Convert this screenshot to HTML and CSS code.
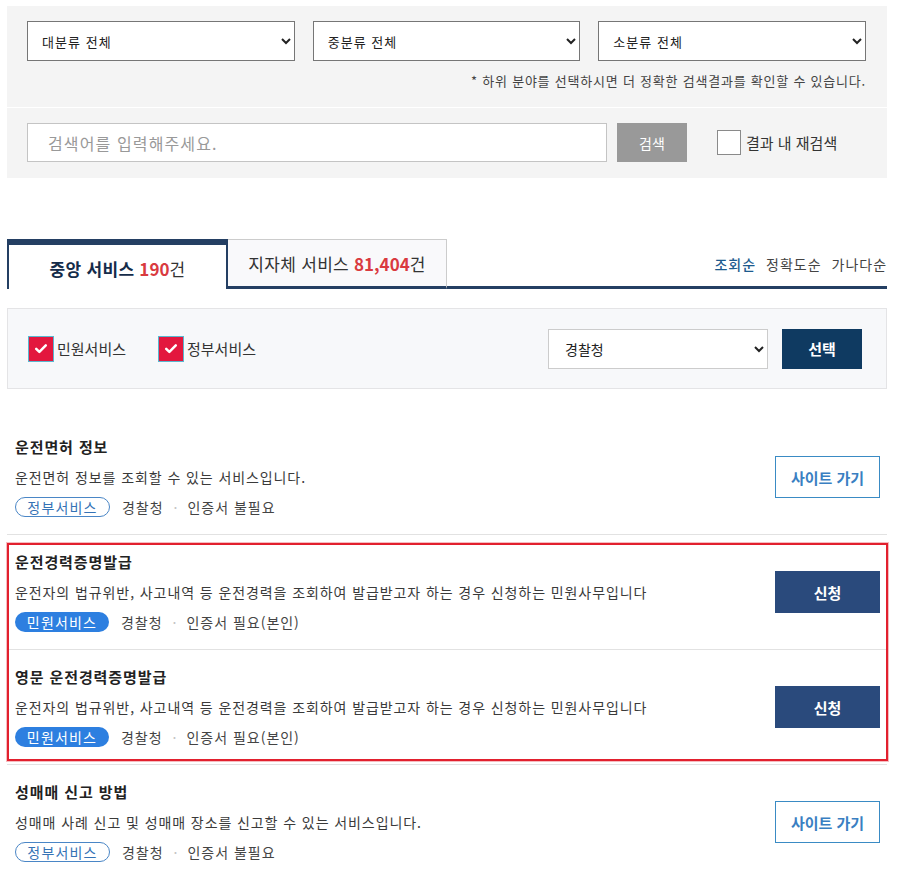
FILE: index.html
```html
<!DOCTYPE html>
<html lang="ko">
<head>
<meta charset="utf-8">
<title>서비스 검색</title>
<link rel="stylesheet" href="styles.css">
</head>
<body>
<div class="page">
  <section class="search-box">
    <div class="search-top">
      <div class="selects">
        <select class="sel"><option>대분류 전체</option></select>
        <select class="sel"><option>중분류 전체</option></select>
        <select class="sel"><option>소분류 전체</option></select>
      </div>
      <p class="note">* 하위 분야를 선택하시면 더 정확한 검색결과를 확인할 수 있습니다.</p>
    </div>
    <div class="search-bottom">
      <input class="search-input" type="text" placeholder="검색어를 입력해주세요.">
      <button class="search-btn" type="button">검색</button>
      <label class="re-search"><span class="box"></span>결과 내 재검색</label>
    </div>
  </section>

  <nav class="tabs">
    <div class="tab active">중앙 서비스 <b class="num">190</b><span class="unit">건</span></div>
    <div class="tab">지자체 서비스 <b class="num">81,404</b>건</div>
    <div class="tab-rest">
      <a class="sort on">조회순</a>
      <a class="sort">정확도순</a>
      <a class="sort">가나다순</a>
    </div>
  </nav>

  <section class="filter">
    <label class="chk"><span class="chk-box"><svg width="25" height="25" viewBox="0 0 25 25"><path d="M7.5 12.8 L10.8 16 L17.5 9.2" fill="none" stroke="#fff" stroke-width="2.6" stroke-linecap="round" stroke-linejoin="round"/></svg></span>민원서비스</label>
    <label class="chk"><span class="chk-box"><svg width="25" height="25" viewBox="0 0 25 25"><path d="M7.5 12.8 L10.8 16 L17.5 9.2" fill="none" stroke="#fff" stroke-width="2.6" stroke-linecap="round" stroke-linejoin="round"/></svg></span>정부서비스</label>
    <div class="filter-right">
      <select class="org"><option>경찰청</option></select>
      <button class="pick-btn" type="button">선택</button>
    </div>
  </section>

  <ul class="list">
    <li class="item">
      <div class="item-body">
        <h3 class="title">운전면허 정보</h3>
        <p class="desc">운전면허 정보를 조회할 수 있는 서비스입니다.</p>
        <div class="meta"><span class="pill outline">정부서비스</span><span>경찰청</span><span class="dot">·</span><span>인증서 불필요</span></div>
      </div>
      <button class="btn-site" type="button">사이트 가기</button>
    </li>
    <li class="hl">
      <ul class="hl-list">
        <li class="item">
          <div class="item-body">
            <h3 class="title">운전경력증명발급</h3>
            <p class="desc">운전자의 법규위반, 사고내역 등 운전경력을 조회하여 발급받고자 하는 경우 신청하는 민원사무입니다</p>
            <div class="meta"><span class="pill filled">민원서비스</span><span>경찰청</span><span class="dot">·</span><span>인증서 필요(본인)</span></div>
          </div>
          <button class="btn-apply" type="button">신청</button>
        </li>
        <li class="item">
          <div class="item-body">
            <h3 class="title">영문 운전경력증명발급</h3>
            <p class="desc">운전자의 법규위반, 사고내역 등 운전경력을 조회하여 발급받고자 하는 경우 신청하는 민원사무입니다</p>
            <div class="meta"><span class="pill filled">민원서비스</span><span>경찰청</span><span class="dot">·</span><span>인증서 필요(본인)</span></div>
          </div>
          <button class="btn-apply" type="button">신청</button>
        </li>
      </ul>
    </li>
    <li class="item">
      <div class="item-body">
        <h3 class="title">성매매 신고 방법</h3>
        <p class="desc">성매매 사례 신고 및 성매매 장소를 신고할 수 있는 서비스입니다.</p>
        <div class="meta"><span class="pill outline">정부서비스</span><span>경찰청</span><span class="dot">·</span><span>인증서 불필요</span></div>
      </div>
      <button class="btn-site" type="button">사이트 가기</button>
    </li>
  </ul>
</div>
</body>
</html>
```

FILE: styles.css
```css
* { box-sizing: border-box; }
html, body { margin: 0; padding: 0; background: #fff; }
body {
  font-family: "Noto Sans CJK KR", "Noto Sans", sans-serif;
  color: #333;
  font-size: 14px;
  line-height: 20px;
}
ul { list-style: none; margin: 0; padding: 0; }
p, h3 { margin: 0; }
button { font-family: inherit; cursor: pointer; }

.page { width: 880px; margin-left: 7px; padding-top: 6px; }

/* search box */
.search-box { background: #f4f4f4; }
.search-top { padding: 15px 21px 16px 20px; border-bottom: 1px solid #fff; }
.selects { display: grid; grid-template-columns: repeat(3, 1fr); gap: 18px; }
.sel {
  height: 40px;
  border: 1px solid #767676;
  border-radius: 0;
  background-color: #fff;
  font-family: inherit;
  font-size: 13px;
  letter-spacing: 0.08em;
  color: #222;
  padding: 0 8px 0 10px;
}
.note { margin-top: 10px; text-align: right; font-size: 13px; letter-spacing: 0.06em; color: #444; line-height: 20px; }

.search-bottom { display: flex; align-items: center; padding: 15px 20px 16px; }
.search-input {
  width: 580px; height: 39px;
  border: 1px solid #c4c4c4;
  background: #fff;
  padding: 0 20px;
  font-family: inherit; font-size: 16px; letter-spacing: 0.07em; color: #333;
  outline: none;
}
.search-input::placeholder { color: #999; }
.search-btn {
  width: 70px; height: 39px; margin-left: 10px;
  border: 0; background: #999; color: #fff; font-size: 14px;
}
.re-search { display: flex; align-items: center; margin-left: 30px; font-size: 15px; color: #333; }
.re-search .box { width: 24px; height: 25px; border: 1px solid #8a8a8a; background: #fff; margin-right: 5px; }

/* tabs */
.tabs { display: flex; height: 50px; margin-top: 61px; }
.tab {
  width: 219px;
  display: flex; align-items: center; justify-content: center;
  font-size: 17px; color: #333; letter-spacing: 0.3px;
  background: #f9f9fb;
  border-top: 1px solid #ccc;
  border-right: 1px solid #ccc;
  border-bottom: 3px solid #243f63;
  padding-top: 1px;
}
.tab.active {
  width: 221px;
  background: #fff;
  color: #152c4a;
  font-weight: 700;
  border: 2px solid #243f63;
  border-top-width: 6px;
  border-bottom: 0;
  padding-top: 4px;
}
.tab .num { color: #d93a3f; font-weight: 700; margin-left: 5px; letter-spacing: 0; }
.tab .unit { font-weight: 400; color: #333; }
.tab-rest {
  flex: 1;
  display: flex; justify-content: flex-end; align-items: center; gap: 10px;
  border-bottom: 3px solid #243f63;
  padding-top: 3px;
}
.sort { font-size: 14px; color: #444; letter-spacing: 0.07em; }
.sort.on { color: #1c5a8e; font-weight: 500; }

/* filter */
.filter {
  display: flex; align-items: center;
  height: 81px; margin-top: 19px;
  background: #f7f8fa;
  border: 1px solid #e4e4e6;
  padding: 0 24px 0 20px;
}
.chk { display: flex; align-items: center; font-size: 15px; color: #333; margin-right: 32px; }
.chk-box {
  width: 26px; height: 26px;
  background: #e3173e;
  border: 1px solid #59b7d0;
  display: flex; align-items: center; justify-content: center;
  margin-right: 3px;
}
.chk-box svg { display: block; }
.filter-right { margin-left: auto; display: flex; align-items: center; }
.org {
  width: 220px; height: 40px;
  border: 1px solid #ccc; border-radius: 0;
  background-color: #fff;
  font-family: inherit; font-size: 14px; color: #222;
  padding: 0 10px 0 12px;
}
.pick-btn {
  width: 80px; height: 40px; margin-left: 14px;
  border: 0; background: #0f3a61; color: #fff;
  font-size: 15px; font-weight: 700;
}

/* list */
.list { margin-top: 31px; }
.item {
  display: flex; align-items: center;
  padding: 12px 7px 12px 8px;
  border-bottom: 1px solid #e2e2e2;
}
.item-body { flex: 1; }
.title { font-size: 15px; font-weight: 700; color: #222; line-height: 30px; letter-spacing: 0.06em; }
.desc { font-size: 14px; color: #3a3a3a; line-height: 30px; letter-spacing: 0.065em; }
.meta { display: flex; align-items: center; height: 30px; font-size: 14px; color: #444; letter-spacing: 0.07em; }
.pill {
  display: inline-flex; align-items: center; justify-content: center;
  height: 20px; border-radius: 10px;
  font-size: 14px; letter-spacing: 1.2px;
  margin-right: 12px;
}
.pill.outline { width: 95px; border: 1px solid #4a86c6; color: #3572b5; background: #fff; }
.pill.filled { width: 94px; background: #2d7fe0; color: #fff; }
.dot { color: #c4c4c4; margin: 0 9px 0 10px; }

.btn-site {
  width: 105px; height: 42px;
  border: 1px solid #3a8bc4; background: #fff;
  color: #3a7fc2; font-size: 15px; font-weight: 700;
}
.btn-apply {
  width: 105px; height: 42px;
  border: 0; background: #2a4a7c;
  color: #fff; font-size: 15px; font-weight: 700;
}

.hl { position: relative; }
.hl::after {
  content: "";
  position: absolute;
  left: 0; right: -1px; top: 8px; bottom: 4px;
  border: 2px solid #e2202e;
  box-shadow: 0 0 0 1px rgba(226, 32, 46, 0.3);
  pointer-events: none;
}
```
